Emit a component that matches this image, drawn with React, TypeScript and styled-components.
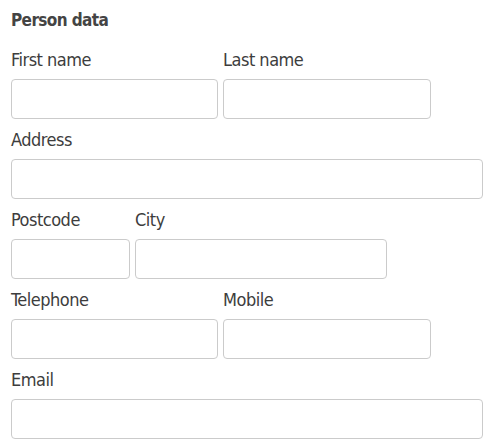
import styled, { createGlobalStyle } from "styled-components";

const GlobalStyle = createGlobalStyle`
  body {
    margin: 0;
    background: #ffffff;
    font-family: "DejaVu Sans Condensed", "Liberation Sans Narrow", "DejaVu Sans", sans-serif;
    color: #3d3d3d;
  }
`;

const Form = styled.form`
  display: flex;
  flex-direction: column;
  padding: 9px 11px 0 11px;
`;

const Title = styled.h3`
  margin: 0 0 17px 0;
  font-size: 17px;
  font-weight: bold;
  line-height: 22px;
  letter-spacing: -0.6px;
  color: #444;
`;

const Row = styled.div`
  display: flex;
  gap: 5px;
  margin-bottom: 9px;
`;

const Field = styled.div<{ w: number }>`
  display: flex;
  flex-direction: column;
  width: ${({ w }) => w}px;
`;

const Label = styled.label`
  font-size: 18px;
  line-height: 24px;
  height: 24px;
  margin-bottom: 7px;
  letter-spacing: -0.5px;
  color: #3d3d3d;
`;

const Input = styled.input`
  box-sizing: border-box;
  width: 100%;
  height: 40px;
  border: 1px solid #cbcbcb;
  border-radius: 4px;
  background: #fff;
  padding: 0 8px;
  font: inherit;
  outline: none;
`;

type FieldDef = { label: string; w: number };

const rows: FieldDef[][] = [
  [
    { label: "First name", w: 207 },
    { label: "Last name", w: 208 },
  ],
  [{ label: "Address", w: 472 }],
  [
    { label: "Postcode", w: 119 },
    { label: "City", w: 252 },
  ],
  [
    { label: "Telephone", w: 207 },
    { label: "Mobile", w: 208 },
  ],
  [{ label: "Email", w: 472 }],
];

export default function App() {
  return (
    <>
      <GlobalStyle />
      <Form>
        <Title>Person data</Title>
        {rows.map((row, i) => (
          <Row key={i}>
            {row.map((f) => (
              <Field key={f.label} w={f.w}>
                <Label>{f.label}</Label>
                <Input type="text" />
              </Field>
            ))}
          </Row>
        ))}
      </Form>
    </>
  );
}
